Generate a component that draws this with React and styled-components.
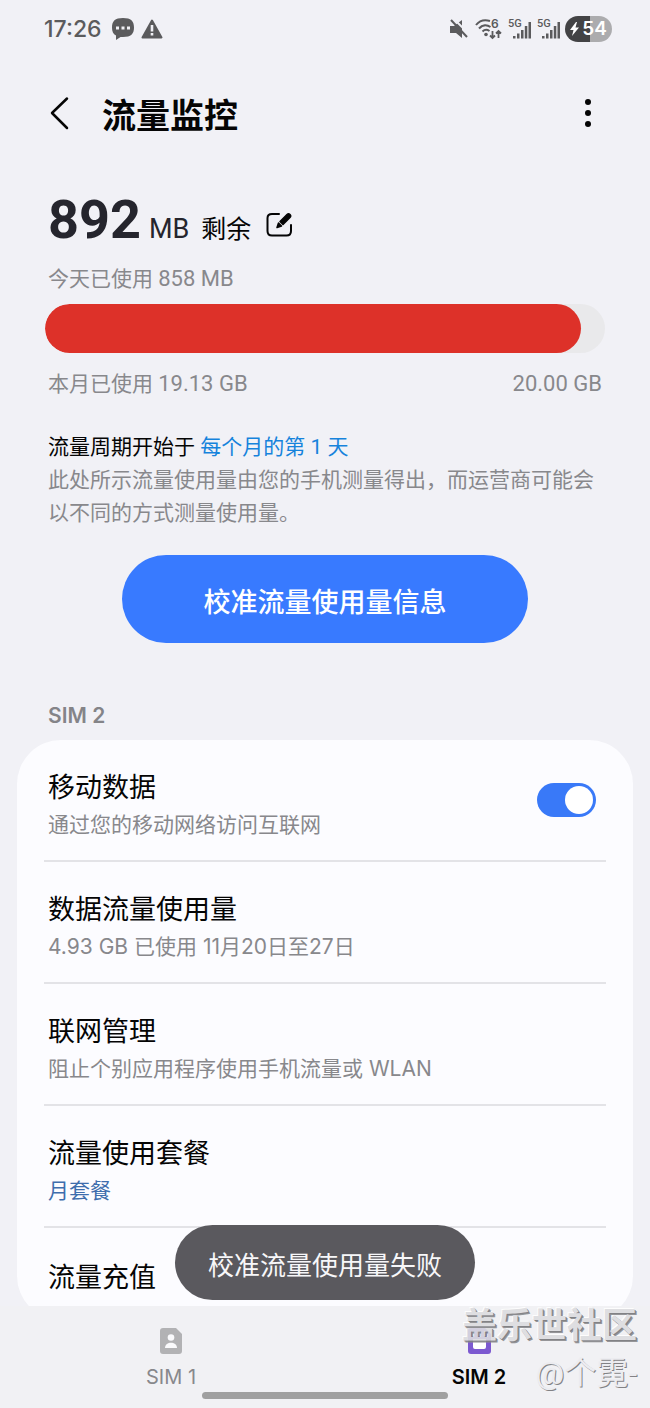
import React, { useState } from "react";
import styled, { createGlobalStyle } from "styled-components";

const GlobalStyle = createGlobalStyle`
  * {
    box-sizing: border-box;
  }

  body {
    margin: 0;
    background: #f1f1f6;
    color: #050505;
    font-family: Roboto, "Noto Sans CJK SC", sans-serif;
  }

  button {
    border: 0;
    padding: 0;
    background: none;
    color: inherit;
    font: inherit;
    cursor: pointer;
  }

  svg {
    display: block;
    overflow: visible;
  }
`;

const Screen = styled.div`
  position: relative;
  display: flex;
  flex-direction: column;
  height: 100vh;
  overflow: hidden;
`;

const StatusBar = styled.div`
  display: flex;
  flex-shrink: 0;
  align-items: center;
  justify-content: space-between;
  height: 58px;
  padding: 0 38px 0 44px;
  color: #5b5b5d;
`;

const StatusGroup = styled.div`
  display: flex;
  align-items: center;
  gap: ${(props) => props.$gap}px;
`;

const Clock = styled.time`
  margin-right: 3px;
  font: 500 23px/28px Inter, sans-serif;
`;

const Battery = styled.div`
  display: flex;
  align-items: center;
  justify-content: center;
  gap: 3px;
  width: 47px;
  height: 26px;
  border-radius: 13px;
  background: linear-gradient(90deg, #434345 54%, #acacae 54%);
  color: #fff;
  font: 600 19px/26px Inter, sans-serif;
`;

const Header = styled.header`
  display: flex;
  flex-shrink: 0;
  align-items: center;
  height: 110px;
  padding: 0 46px;
`;

const Title = styled.h1`
  flex: 1;
  margin: 0 0 0 28px;
  padding-top: 5px;
  font-size: 34px;
  font-weight: 700;
  line-height: 44px;
`;

const Content = styled.main`
  flex: 1;
  min-height: 0;
  overflow: hidden;
`;

const Summary = styled.section`
  padding: 20px 45px 0;
`;

const Remaining = styled.div`
  display: flex;
  align-items: baseline;
  padding-left: 3px;
  line-height: 64px;
`;

const Amount = styled.strong`
  color: #25252d;
  font-size: 54px;
  font-weight: 700;
`;

const Unit = styled.span`
  margin-left: 8px;
  color: #25252d;
  font-size: 27px;
`;

const Left = styled.span`
  margin: 0 15px 0 12px;
  font-size: 25px;
`;

const Note = styled.p`
  display: flex;
  justify-content: space-between;
  margin: 0;
  padding: 0 3px;
  color: #88888c;
  font-size: 21px;
  line-height: 33px;
`;

const Num = styled.span`
  font-size: 22px;
`;

const Bar = styled.div`
  height: 49px;
  margin: 8px 0 14px;
  overflow: hidden;
  border-radius: 25px;
  background: #e9e9eb;
`;

const BarFill = styled.div`
  height: 100%;
  border-radius: 25px;
  background: #dd3129;
`;

const Cycle = styled.p`
  margin: 30px 0 0;
  padding: 0 3px;
  font-size: 21px;
  line-height: 33px;

  & a {
    color: #1683dc;
    text-decoration: none;
  }
`;

const SyncButton = styled.button`
  && {
    display: block;
    width: 100%;
    max-width: 406px;
    height: 88px;
    margin: 25px auto 0;
    padding-top: 2px;
    border-radius: 44px;
    background: #387aff;
    color: #fff;
    font-size: 27px;
    font-weight: 500;
  }
`;

const GroupTitle = styled.h2`
  margin: 59px 48px 10px;
  color: #848488;
  font: 600 21px/28px Inter, sans-serif;
`;

const Card = styled.section`
  margin: 0 17px;
  padding: 0 27px;
  border-radius: 44px;
  background: #fcfcff;
`;

const Row = styled.div`
  display: flex;
  align-items: center;
  justify-content: space-between;
  padding: ${(props) => (props.$single ? "30px 4px 22px" : "28px 4px 18px")};
  border-bottom: ${(props) => (props.$single ? "0" : "2px solid #e3e3e7")};
`;

const RowTitle = styled.label`
  display: block;
  font-size: 27px;
  line-height: 40px;
`;

const RowNote = styled.div`
  color: ${(props) => (props.$accent ? "#3e6dad" : "#88888c")};
  font-family: Inter, "Noto Sans CJK SC", sans-serif;
  font-size: 21px;
  line-height: 34px;
`;

const Switch = styled.input`
  appearance: none;
  display: flex;
  align-items: center;
  width: 59px;
  height: 34px;
  margin: 0 6px 10px;
  padding: 3px;
  border-radius: 17px;
  background: #b9b9bd;
  cursor: pointer;

  &::before {
    content: "";
    width: 28px;
    height: 28px;
    border-radius: 50%;
    background: #fff;
  }

  &:checked {
    justify-content: flex-end;
    background: #3979f8;
  }
`;

const Toast = styled.div`
  position: absolute;
  bottom: 108px;
  left: 50%;
  padding: 7px 33px 0;
  border-radius: 38px;
  background: #5a595e;
  color: #f7f7f9;
  font-size: 26px;
  line-height: 68px;
  white-space: nowrap;
  transform: translateX(-50%);
`;

const Footer = styled.footer`
  flex-shrink: 0;
  padding: 22px 17px 9px;
  background: #f1f1f4;
`;

const Tabs = styled.nav`
  display: flex;
`;

const Tab = styled.button`
  && {
    display: flex;
    flex: 1;
    flex-direction: column;
    align-items: center;
    gap: 9px;
    color: ${(props) => (props.$active ? "#050505" : "#88888c")};
    font: ${(props) => (props.$active ? 600 : 400)} 20px/28px Inter, sans-serif;
  }
`;

const HomeIndicator = styled.div`
  width: 40%;
  height: 7px;
  margin: 1px auto 0;
  border-radius: 4px;
  background: #a0a0a0;
`;

const Watermark = styled.div`
  position: absolute;
  right: 13px;
  bottom: 12px;
  color: #dcdce0;
  text-align: right;
  text-shadow: 1px 1px 0 #77777a, 2px 2px 0 #8c8c8f, -1px -1px 0 #fff;
  opacity: 0.9;
  pointer-events: none;
`;

const Community = styled.div`
  font-size: 35px;
  font-weight: 700;
  line-height: 46px;
`;

const Author = styled.div`
  color: #ececf0;
  font-size: 32px;
  line-height: 46px;
  text-shadow: 1px 1px 0 #77777a;
`;

const ChatIcon = () => (
  <svg width="22" height="22" viewBox="0 0 22 22">
    <path
      d="M11 0C3 0 0 3 0 9.500c0 4 1.200 6.600 4 8.100V22l4.500-3 2.500.1c8 0 11-3 11-9.500S19 0 11 0Z"
      fill="currentColor"
    />
    <path d="M4 8.500h3v3H4zm5.500 0h3v3h-3zm5.500 0h3v3h-3z" fill="#f1f1f6" />
  </svg>
);

const WarningIcon = () => (
  <svg width="22" height="20" viewBox="0 0 22 20">
    <path
      d="M11 1.500 20.500 18.500h-19Z"
      fill="currentColor"
      stroke="currentColor"
      strokeWidth="2"
      strokeLinejoin="round"
    />
    <path d="M9.700 6h2.600v6.500H9.700zm0 8h2.600v2.600H9.700z" fill="#f1f1f6" />
  </svg>
);

const MuteIcon = () => (
  <svg width="20" height="20" viewBox="0 0 20 20">
    <path d="M1 7h4l8-6v18l-6-5H1Z" fill="currentColor" />
    <path d="M4-1 21 16" stroke="#f1f1f6" strokeWidth="2" />
    <path d="m2 1 16 17" stroke="currentColor" strokeWidth="2" />
  </svg>
);

const WifiIcon = () => (
  <svg width="28" height="22" viewBox="0 0 28 22" fill="none">
    <path
      d="M2 7c4-5 9-5.500 14-4M5 10.500c3.500-4 8-4 11.500-1.500M8.500 13.500c2-2 4.500-2.300 7-.5"
      stroke="currentColor"
      strokeWidth="2"
    />
    <circle cx="12" cy="16.500" r="1.800" fill="currentColor" />
    <path
      d="M18.500 13v7m-2.500-2.500 2.500 2.500 2.500-2.500M24.500 20v-7M22 15.500l2.500-2.500 2.500 2.500"
      stroke="currentColor"
      strokeWidth="1.800"
    />
    <text x="17" y="10" fill="currentColor" fontFamily="Inter" fontSize="12" fontWeight="600">
      6
    </text>
  </svg>
);

const SignalIcon = () => (
  <svg width="24" height="22" viewBox="0 0 24 22" fill="currentColor">
    <text x="1" y="9" fontFamily="Roboto" fontSize="11" fontWeight="500">
      5G
    </text>
    <path d="M6 18h2.500v2.500H6zM10 15.500h2.500v5H10zM14 12h2.500v8.500H14zM17.800 8h2.500v12.500h-2.500zM21.500 4H24v16.500h-2.500z" />
  </svg>
);

const BoltIcon = () => (
  <svg width="9" height="14" viewBox="0 0 9 14">
    <path d="M6 0 0 8h3.500L2 14l7-8.500H5.500L7 0Z" fill="currentColor" />
  </svg>
);

const BackIcon = () => (
  <svg width="28" height="36" viewBox="0 0 28 36" fill="none">
    <path
      d="M21 3.500 6 18l15 15"
      stroke="currentColor"
      strokeWidth="2.500"
      strokeLinecap="round"
      strokeLinejoin="round"
    />
  </svg>
);

const MoreIcon = () => (
  <svg width="32" height="32" viewBox="0 0 32 32" fill="currentColor">
    <circle cx="16" cy="5" r="3" />
    <circle cx="16" cy="16" r="3" />
    <circle cx="16" cy="27" r="3" />
  </svg>
);

const EditIcon = () => (
  <svg width="28" height="26" viewBox="0 0 28 26" fill="none">
    <path
      d="M13 2H6C3 2 1.500 3.500 1.500 6v13c0 3 1.500 4.500 4.500 4.500h14.500c3 0 4.500-1.500 4.500-4.500v-6"
      stroke="currentColor"
      strokeWidth="2"
      strokeLinecap="round"
    />
    <path
      d="m14 9.500 7-7c1-1 2-1 3 0s1 2 0 3l-7 7ZM12.500 11l3 3-4.500 1.500Z"
      fill="currentColor"
      stroke="currentColor"
      strokeWidth="1.500"
      strokeLinejoin="round"
    />
  </svg>
);

const PersonSimIcon = () => (
  <svg width="22" height="26" viewBox="0 0 22 26">
    <path d="M3 0h13l6 6v17a3 3 0 0 1-3 3H3a3 3 0 0 1-3-3V3a3 3 0 0 1 3-3Z" fill="#b2b2b4" />
    <circle cx="11" cy="9.500" r="3.300" fill="#fafafc" />
    <path d="M5 20c0-7 12-7 12 0Z" fill="#fafafc" />
  </svg>
);

const ChipSimIcon = () => (
  <svg width="23" height="26" viewBox="0 0 23 26">
    <path d="M3 0h14l6 6v17a3 3 0 0 1-3 3H3a3 3 0 0 1-3-3V3a3 3 0 0 1 3-3Z" fill="#7c59d0" />
    <path
      d="M5 11h13v8a2 2 0 0 1-2 2H7a2 2 0 0 1-2-2ZM4 3h2v5H4zm6 0h2v5h-2zm6 0h2v5h-2z"
      fill="#fff"
    />
  </svg>
);

const USED = 19.13;
const LIMIT = 20;

const rows = [
  { title: "数据流量使用量", note: "4.93 GB 已使用 11月20日至27日" },
  { title: "联网管理", note: "阻止个别应用程序使用手机流量或 WLAN" },
  { title: "流量使用套餐", note: "月套餐", accent: true },
  { title: "流量充值" },
];

const tabs = [
  { name: "SIM 1", icon: <PersonSimIcon /> },
  { name: "SIM 2", icon: <ChipSimIcon /> },
];

const App = () => {
  const [mobileData, setMobileData] = useState(true);
  const [activeTab, setActiveTab] = useState("SIM 2");

  const mobileDataHandler = (event) => {
    setMobileData(event.target.checked);
  };

  return (
    <Screen>
      <GlobalStyle />
      <StatusBar>
        <StatusGroup $gap={7}>
          <Clock>17:26</Clock>
          <ChatIcon />
          <WarningIcon />
        </StatusGroup>
        <StatusGroup $gap={5}>
          <MuteIcon />
          <WifiIcon />
          <SignalIcon />
          <SignalIcon />
          <Battery>
            <BoltIcon />
            54
          </Battery>
        </StatusGroup>
      </StatusBar>

      <Header>
        <button type="button" aria-label="返回">
          <BackIcon />
        </button>
        <Title>流量监控</Title>
        <button type="button" aria-label="更多选项">
          <MoreIcon />
        </button>
      </Header>

      <Content>
        <Summary>
          <Remaining>
            <Amount>892</Amount>
            <Unit>MB</Unit>
            <Left>剩余</Left>
            <button type="button" aria-label="编辑">
              <EditIcon />
            </button>
          </Remaining>
          <Note>
            <span>
              今天已使用 <Num>858 MB</Num>
            </span>
          </Note>
          <Bar>
            <BarFill style={{ width: `${(USED / LIMIT) * 100}%` }} />
          </Bar>
          <Note>
            <span>
              本月已使用 <Num>{USED.toFixed(2)} GB</Num>
            </span>
            <Num>{LIMIT.toFixed(2)} GB</Num>
          </Note>
          <Cycle>
            流量周期开始于 <a href="#cycle">每个月的第 1 天</a>
          </Cycle>
          <Note>
            此处所示流量使用量由您的手机测量得出，而运营商可能会以不同的方式测量使用量。
          </Note>
          <SyncButton type="button">校准流量使用量信息</SyncButton>
        </Summary>

        <GroupTitle>SIM 2</GroupTitle>
        <Card>
          <Row>
            <div>
              <RowTitle htmlFor="mobile-data">移动数据</RowTitle>
              <RowNote>通过您的移动网络访问互联网</RowNote>
            </div>
            <Switch
              id="mobile-data"
              type="checkbox"
              role="switch"
              checked={mobileData}
              onChange={mobileDataHandler}
            />
          </Row>
          {rows.map((row) => (
            <Row key={row.title} $single={!row.note}>
              <div>
                <RowTitle as="div">{row.title}</RowTitle>
                {row.note && <RowNote $accent={row.accent}>{row.note}</RowNote>}
              </div>
            </Row>
          ))}
        </Card>
      </Content>

      <Footer>
        <Tabs>
          {tabs.map((tab) => (
            <Tab
              key={tab.name}
              type="button"
              $active={tab.name === activeTab}
              onClick={() => setActiveTab(tab.name)}
            >
              {tab.icon}
              {tab.name}
            </Tab>
          ))}
        </Tabs>
        <HomeIndicator />
      </Footer>

      <Toast role="status">校准流量使用量失败</Toast>
      <Watermark>
        <Community>盖乐世社区</Community>
        <Author>@个霓-</Author>
      </Watermark>
    </Screen>
  );
};

export default App;
